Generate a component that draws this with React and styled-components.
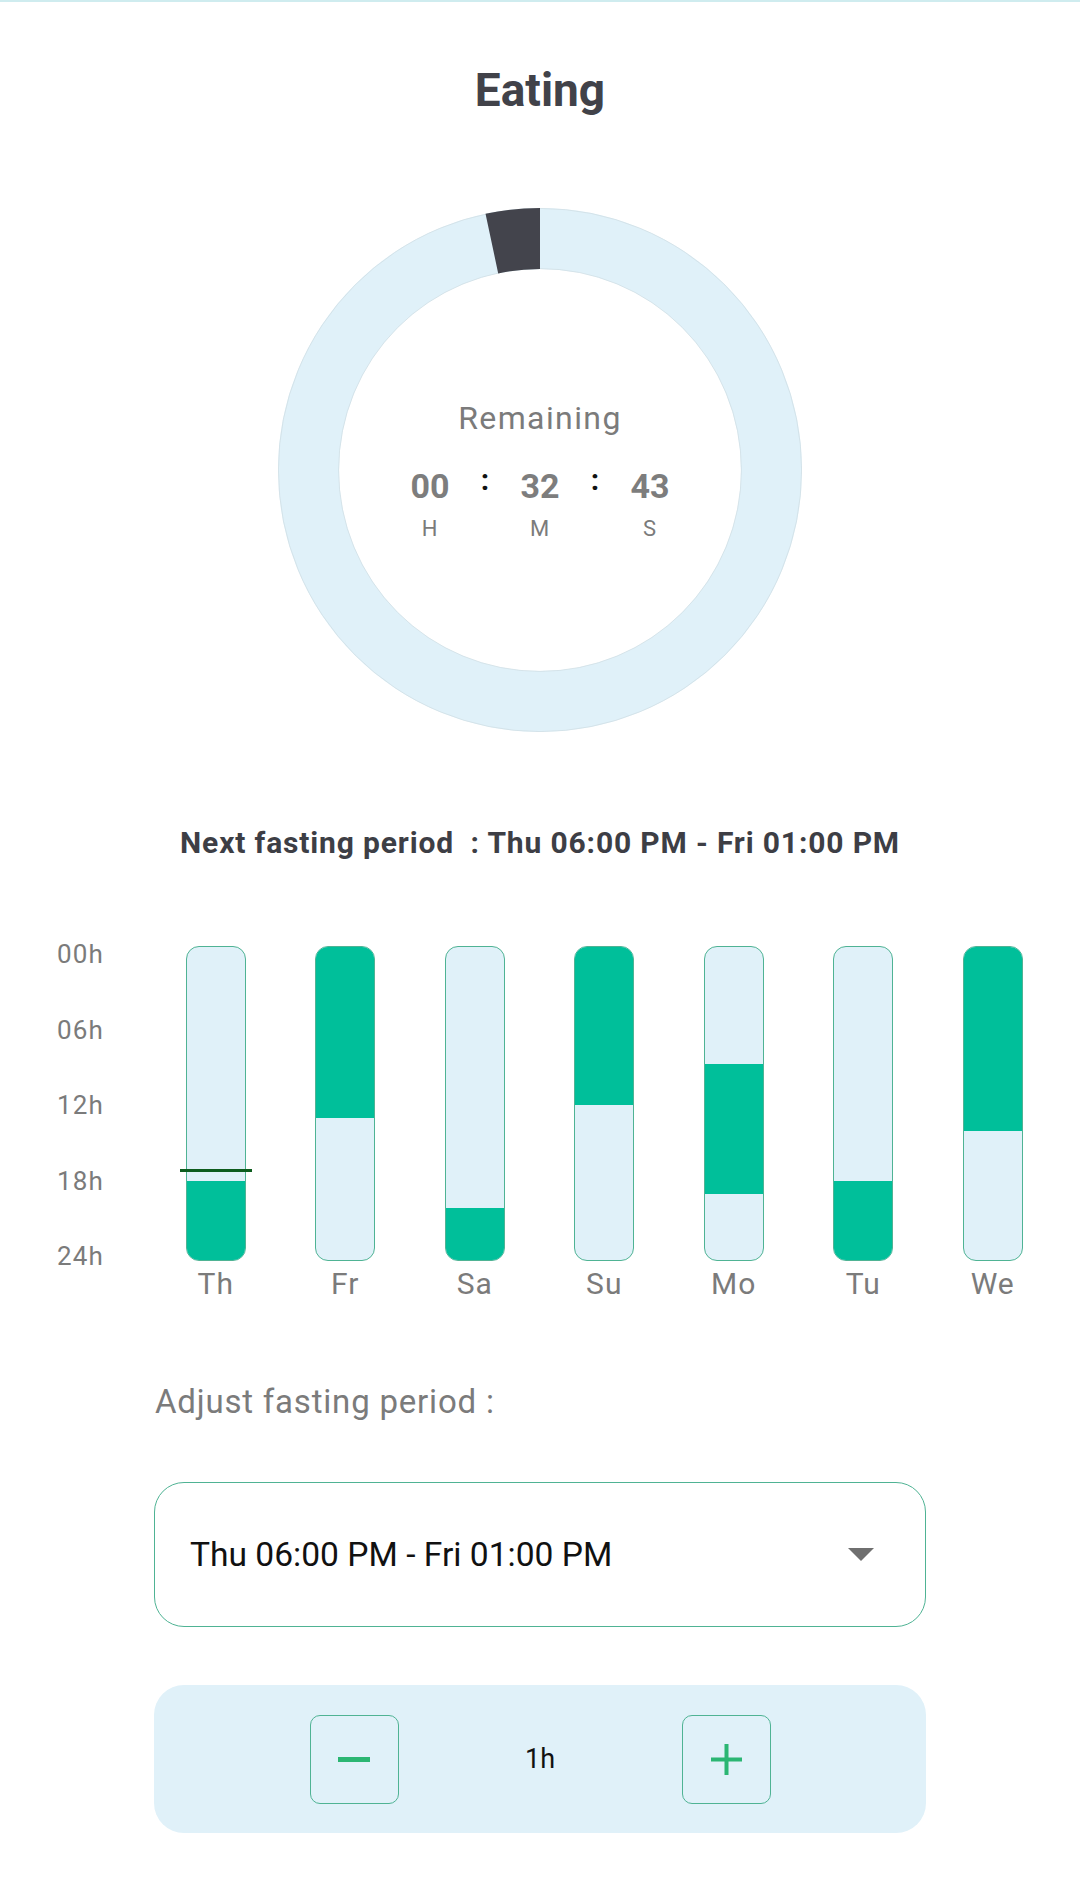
import React from "react";
import styled, { createGlobalStyle } from "styled-components";

const GlobalStyle = createGlobalStyle`
  html, body { margin: 0; padding: 0; background: #ffffff; }
  body { font-family: Roboto, "Noto Sans", "Liberation Sans", sans-serif; }
  * { box-sizing: border-box; }
`;

const Page = styled.div`
  width: 1080px;
  min-height: 1890px;
  display: flex;
  flex-direction: column;
  align-items: center;
  background: #ffffff;
`;

const TopLine = styled.div`
  align-self: stretch;
  height: 2px;
  background: #cfecef;
`;

const Title = styled.h1`
  margin: 61px 0 0;
  font-size: 46px;
  line-height: 54px;
  font-weight: 700;
  color: #414249;
`;

const RingWrap = styled.div`
  position: relative;
  margin-top: 91px;
  width: 524px;
  height: 524px;
  display: flex;
  flex-direction: column;
  align-items: center;
  justify-content: center;
`;

const RingSvg = styled.svg`
  position: absolute;
  inset: 0;
`;

const Remaining = styled.div`
  position: relative;
  font-size: 32px;
  line-height: 40px;
  letter-spacing: 1.4px;
  color: #7b7b7b;
`;

const TimeRow = styled.div`
  position: relative;
  margin-top: 28px;
  display: flex;
  align-items: flex-start;
`;

const Unit = styled.div`
  width: 70px;
  display: flex;
  flex-direction: column;
  align-items: center;
`;

const UnitValue = styled.div`
  font-size: 34px;
  line-height: 40px;
  font-weight: 700;
  color: #7d7d7d;
`;

const UnitLabel = styled.div`
  margin-top: 10px;
  font-size: 22px;
  line-height: 26px;
  letter-spacing: 1px;
  color: #7b7b7b;
`;

const Colon = styled.div`
  width: 40px;
  margin-top: -6px;
  text-align: center;
  font-size: 30px;
  line-height: 40px;
  font-weight: 700;
  color: #111111;
`;

const NextText = styled.div`
  margin-top: 94px;
  font-size: 30px;
  line-height: 34px;
  font-weight: 700;
  letter-spacing: 0.85px;
  color: #3d3e45;
  white-space: pre;
`;

const Chart = styled.div`
  margin-top: 79px;
  align-self: stretch;
  padding-left: 57px;
  display: flex;
  align-items: flex-start;
`;

const Axis = styled.div`
  width: 94px;
  height: 332px;
  display: flex;
  flex-direction: column;
  justify-content: space-between;
`;

const AxisLabel = styled.div`
  font-size: 26px;
  line-height: 30px;
  letter-spacing: 1.2px;
  color: #7b7b7b;
`;

const Days = styled.div`
  display: grid;
  grid-template-columns: repeat(7, 129.5px);
`;

const DayCol = styled.div`
  padding-top: 7px;
  display: flex;
  flex-direction: column;
  align-items: center;
`;

const BarWrap = styled.div`
  position: relative;
  width: 60px;
  height: 315px;
`;

const Bar = styled.div`
  position: relative;
  width: 100%;
  height: 100%;
  border: 1.5px solid #4fb394;
  border-radius: 13px;
  background: #e0f1f9;
  overflow: hidden;
`;

const Fill = styled.div`
  position: absolute;
  left: -2px;
  right: -2px;
  background: #00bf9a;
`;

const NowMarker = styled.div`
  position: absolute;
  left: -6px;
  right: -6px;
  height: 3px;
  background: #0d5c1e;
`;

const DayLabel = styled.div`
  margin-top: 6px;
  font-size: 30px;
  line-height: 34px;
  letter-spacing: 1px;
  color: #7b7b7b;
`;

const AdjustLabel = styled.div`
  align-self: flex-start;
  margin: 81px 0 0 155px;
  font-size: 33px;
  line-height: 40px;
  letter-spacing: 0.8px;
  color: #7b7b7b;
`;

const Dropdown = styled.div`
  margin-top: 60px;
  width: 772px;
  height: 145px;
  border: 1.5px solid #4fb394;
  border-radius: 30px;
  padding: 0 51px 0 35px;
  display: flex;
  align-items: center;
  justify-content: space-between;
`;

const DropText = styled.div`
  font-size: 33.6px;
  line-height: 40px;
  color: #111111;
`;

const Caret = styled.div`
  width: 0;
  height: 0;
  border-left: 13px solid transparent;
  border-right: 13px solid transparent;
  border-top: 13px solid #6f6f6f;
`;

const Stepper = styled.div`
  margin-top: 58px;
  width: 772px;
  height: 148px;
  border-radius: 30px;
  background: #e0f1f9;
  display: flex;
  align-items: center;
  justify-content: center;
`;

const StepButton = styled.button`
  width: 89px;
  height: 89px;
  padding: 0;
  border: 1.5px solid #4fb394;
  border-radius: 10px;
  background: transparent;
  display: flex;
  align-items: center;
  justify-content: center;
  cursor: pointer;
`;

const StepValue = styled.div`
  width: 283px;
  text-align: center;
  font-size: 27px;
  line-height: 32px;
  color: #111111;
`;

const TOTAL = 24;
const days = [
  { name: "Th", fill: [18, 24], now: 17.1 },
  { name: "Fr", fill: [0, 13] },
  { name: "Sa", fill: [20, 24] },
  { name: "Su", fill: [0, 12] },
  { name: "Mo", fill: [9.05, 19] },
  { name: "Tu", fill: [18, 24] },
  { name: "We", fill: [0, 14] },
];

const BAR_H = 315;

function Ring() {
  const cx = 262;
  const ro = 262;
  const ri = 201;
  const a = (12 * Math.PI) / 180;
  const ox = cx - ro * Math.sin(a);
  const oy = cx - ro * Math.cos(a);
  const ix = cx - ri * Math.sin(a);
  const iy = cx - ri * Math.cos(a);
  const d = `M ${cx} 0 A ${ro} ${ro} 0 0 0 ${ox} ${oy} L ${ix} ${iy} A ${ri} ${ri} 0 0 1 ${cx} ${cx - ri} Z`;
  return (
    <RingSvg width="524" height="524" viewBox="0 0 524 524">
      <circle cx={cx} cy={cx} r={(ro + ri) / 2} fill="none" stroke="#e0f1f9" strokeWidth={ro - ri} />
      <circle cx={cx} cy={cx} r={ro - 0.4} fill="none" stroke="#cfdce2" strokeWidth="0.7" />
      <circle cx={cx} cy={cx} r={ri + 0.4} fill="none" stroke="#cfdce2" strokeWidth="0.7" />
      <path d={d} fill="#43444c" />
    </RingSvg>
  );
}

function MinusIcon() {
  return (
    <svg width="32" height="32" viewBox="0 0 32 32">
      <rect x="0" y="14" width="32" height="5" fill="#2bb673" />
    </svg>
  );
}

function PlusIcon() {
  return (
    <svg width="31" height="31" viewBox="0 0 31 31">
      <rect x="0" y="13.5" width="31" height="4" fill="#2bb673" />
      <rect x="13.5" y="0" width="4" height="31" fill="#2bb673" />
    </svg>
  );
}

export default function App() {
  return (
    <>
      <GlobalStyle />
      <Page>
        <TopLine />
        <Title>Eating</Title>
        <RingWrap>
          <Ring />
          <Remaining>Remaining</Remaining>
          <TimeRow>
            <Unit>
              <UnitValue>00</UnitValue>
              <UnitLabel>H</UnitLabel>
            </Unit>
            <Colon>:</Colon>
            <Unit>
              <UnitValue>32</UnitValue>
              <UnitLabel>M</UnitLabel>
            </Unit>
            <Colon>:</Colon>
            <Unit>
              <UnitValue>43</UnitValue>
              <UnitLabel>S</UnitLabel>
            </Unit>
          </TimeRow>
        </RingWrap>
        <NextText>{"Next fasting period  : Thu 06:00 PM - Fri 01:00 PM"}</NextText>
        <Chart>
          <Axis>
            {["00h", "06h", "12h", "18h", "24h"].map((l) => (
              <AxisLabel key={l}>{l}</AxisLabel>
            ))}
          </Axis>
          <Days>
            {days.map((d) => (
              <DayCol key={d.name}>
                <BarWrap>
                  <Bar>
                    <Fill
                      style={{
                        top: (d.fill[0] / TOTAL) * BAR_H - 2,
                        height: ((d.fill[1] - d.fill[0]) / TOTAL) * BAR_H + (d.fill[0] === 0 || d.fill[1] === TOTAL ? 2 : 0),
                      }}
                    />
                  </Bar>
                  {d.now !== undefined && <NowMarker style={{ top: (d.now / TOTAL) * BAR_H - 1.5 }} />}
                </BarWrap>
                <DayLabel>{d.name}</DayLabel>
              </DayCol>
            ))}
          </Days>
        </Chart>
        <AdjustLabel>Adjust fasting period :</AdjustLabel>
        <Dropdown>
          <DropText>Thu 06:00 PM - Fri 01:00 PM</DropText>
          <Caret />
        </Dropdown>
        <Stepper>
          <StepButton aria-label="decrease">
            <MinusIcon />
          </StepButton>
          <StepValue>1h</StepValue>
          <StepButton aria-label="increase">
            <PlusIcon />
          </StepButton>
        </Stepper>
      </Page>
    </>
  );
}
